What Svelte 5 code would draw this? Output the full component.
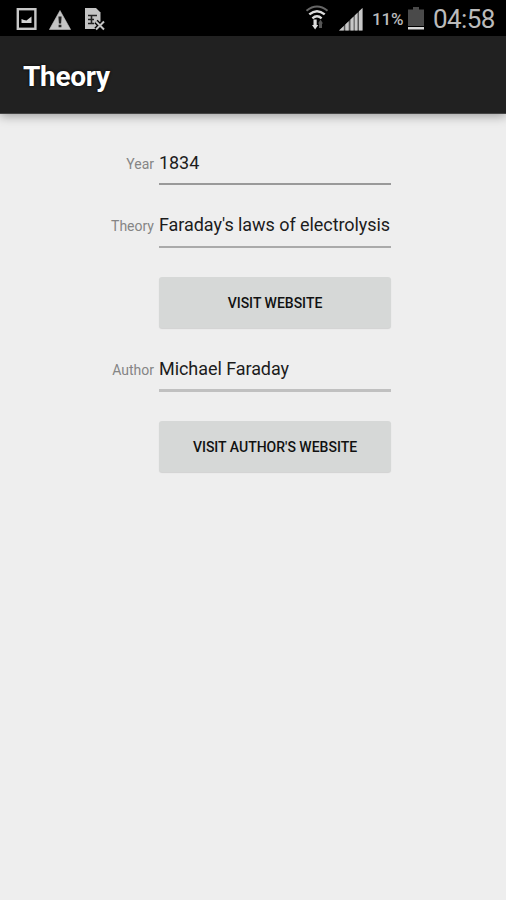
<script>
  const battery = 11;
  const time = '04:58';

  const theory = {
    year: '1834',
    name: "Faraday's laws of electrolysis",
    author: 'Michael Faraday',
  };
</script>

<div class="screen">
  <div class="status-bar">
    <div class="notifications">
      <svg class="picture" width="21" height="22" viewBox="0 0 21 22">
        <rect x="1.8" y="1.2" width="17.600" height="19.600" fill="none" stroke="#c8c8c8" stroke-width="2.400" />
        <path d="M5.500 15v-4l2.500 1 2.500.5 5-4V15z" fill="#d4d4d4" />
      </svg>
      <svg class="warning" width="22" height="20" viewBox="0 0 22 20">
        <path d="M11 .5 21.6 19.5H.4z" fill="#c4c4c4" stroke="#c4c4c4" stroke-width=".6" stroke-linejoin="round" />
        <path d="M9.4 6.5h3.2l-.5 7H9.900zM9.600 14.800h2.800v2.400H9.600z" fill="#222" />
      </svg>
      <svg class="sheet" width="21" height="23" viewBox="0 0 21 23">
        <path d="M1 0h11l4.500 4.500V21H1z" fill="#c4c4c4" />
        <path d="M4 7.500h9M4 11.500h6M4 15.500h6M7.500 7.500v8" stroke="#222" stroke-width="1.600" fill="none" />
        <path d="m12 13.500 8 8m0-8-8 8" stroke="#000" stroke-width="4.600" />
        <path d="m12 13.500 8 8m0-8-8 8" stroke="#c4c4c4" stroke-width="2" />
      </svg>
    </div>

    <div class="system">
      <svg class="wifi" width="24" height="25" viewBox="0 0 24 25">
        <path d="M1.500 5.700Q12-2.600 22.500 5.700" fill="none" stroke="#666" stroke-width="2" />
        <path d="M4.300 9.400q7.700-6.500 15.400 0" fill="none" stroke="#ddd" stroke-width="2.400" />
        <path d="M7.400 13.300q4.600-4 9.200 0" fill="none" stroke="#ddd" stroke-width="2.400" />
        <path d="M8.500 14.500h3.200V20h1.500l-3.100 4.500L7 20h1.500z" fill="#ddd" />
        <path d="m15.500 14.500 2.500 4h-1V23h-3v-4.500h-1z" fill="#555" />
      </svg>
      <svg class="signal" width="24" height="23" viewBox="0 0 24 23">
        <path d="M0 22.500 23.500 0v22.500z" fill="#555" />
        <path d="M0 22.500 4.800 18v4.500zM6.300 16.500l3.400-3.300v9.300H6.300zM11.500 11.500l3.100-3v14h-3.100zM15.700 7.500l2.800-2.700v17.700h-2.800zM20 3.300 23.500 0v22.500H20z" fill="#c8c8c8" />
      </svg>
      <span class="percent">{battery}%</span>
      <svg class="battery" width="16" height="23" viewBox="0 0 16 23">
        <path d="M5 0h6v2.500h5V19H0V2.500h5z" fill="#4a4a4a" />
        <rect y="20" width="16" height="2.500" fill="#d8d8d8" />
      </svg>
      <span class="clock">{time}</span>
    </div>
  </div>

  <header class="action-bar">
    <h1>Theory</h1>
  </header>

  <main class="form">
    <label for="year">Year</label>
    <input id="year" type="text" readonly value={theory.year} />

    <label for="theory">Theory</label>
    <input id="theory" class="soft" type="text" readonly value={theory.name} />

    <button type="button">VISIT WEBSITE</button>

    <label for="author">Author</label>
    <input id="author" class="light" type="text" readonly value={theory.author} />

    <button type="button">VISIT AUTHOR'S WEBSITE</button>
  </main>
</div>

<style>
  :global(body) {
    background: #eee;
  }

  .screen {
    min-height: 900px;
    background: #eee;
    font-family: Roboto, sans-serif;
    color: #1c1c1c;
  }

  .status-bar {
    display: flex;
    justify-content: space-between;
    height: 36px;
    padding: 0 12px 0 16px;
    box-sizing: border-box;
    background: #000;
    color: #bbb;
  }

  .notifications,
  .system {
    display: flex;
    align-items: flex-start;
  }

  .picture {
    margin-top: 8px;
  }

  .warning {
    margin: 10px 0 0 12px;
  }

  .sheet {
    margin: 8px 0 0 13px;
  }

  .wifi {
    margin-top: 5px;
  }

  .signal {
    margin: 8px 0 0 10px;
  }

  .percent {
    margin: 9px 0 0 9px;
    width: 33px;
    font-size: 17px;
    font-weight: 500;
    line-height: 20px;
    letter-spacing: -0.2px;
    white-space: nowrap;
  }

  .battery {
    margin: 7px 0 0 3px;
  }

  .clock {
    margin: 4px 0 0 9px;
    width: 61px;
    font-size: 26px;
    line-height: 31px;
    letter-spacing: -0.6px;
    white-space: nowrap;
  }

  .action-bar {
    display: flex;
    align-items: center;
    height: 78px;
    padding: 4px 0 0 23px;
    background: #212121;
    border-bottom: 1px solid #444;
    box-sizing: border-box;
    box-shadow: 0 2px 10px rgba(0, 0, 0, 0.35);
  }

  h1 {
    margin: 0;
    color: #fff;
    font-size: 28px;
    font-weight: 700;
    line-height: 34px;
    letter-spacing: -0.3px;
    text-shadow: 0 0 3px #000;
  }

  .form {
    display: grid;
    grid-template-columns: 154px 232px;
    column-gap: 5px;
    padding-top: 25px;
  }

  label {
    padding-top: 16px;
    height: 62px;
    box-sizing: border-box;
    color: #858585;
    font-size: 14px;
    line-height: 18px;
    text-align: right;
  }

  input {
    width: 232px;
    height: 46px;
    padding: 2px 0 0;
    box-sizing: border-box;
    border: 0;
    border-bottom: 2px solid #999;
    border-radius: 0;
    background: none;
    color: inherit;
    font: 18px Roboto, sans-serif;
    letter-spacing: -0.06px;
    outline: none;
  }

  input.soft {
    height: 47px;
    border-bottom-color: #aaa;
  }

  input.light {
    height: 47px;
    border-bottom: 3px solid #c0c0c0;
  }

  button {
    grid-column: 2;
    height: 51px;
    margin: 14px 0 17px;
    padding: 0;
    border: 0;
    border-radius: 3px;
    background: #d6d8d7;
    box-shadow: 0 1px 1px rgba(0, 0, 0, 0.12);
    color: #111;
    font: 500 14px Roboto, sans-serif;
  }
</style>
